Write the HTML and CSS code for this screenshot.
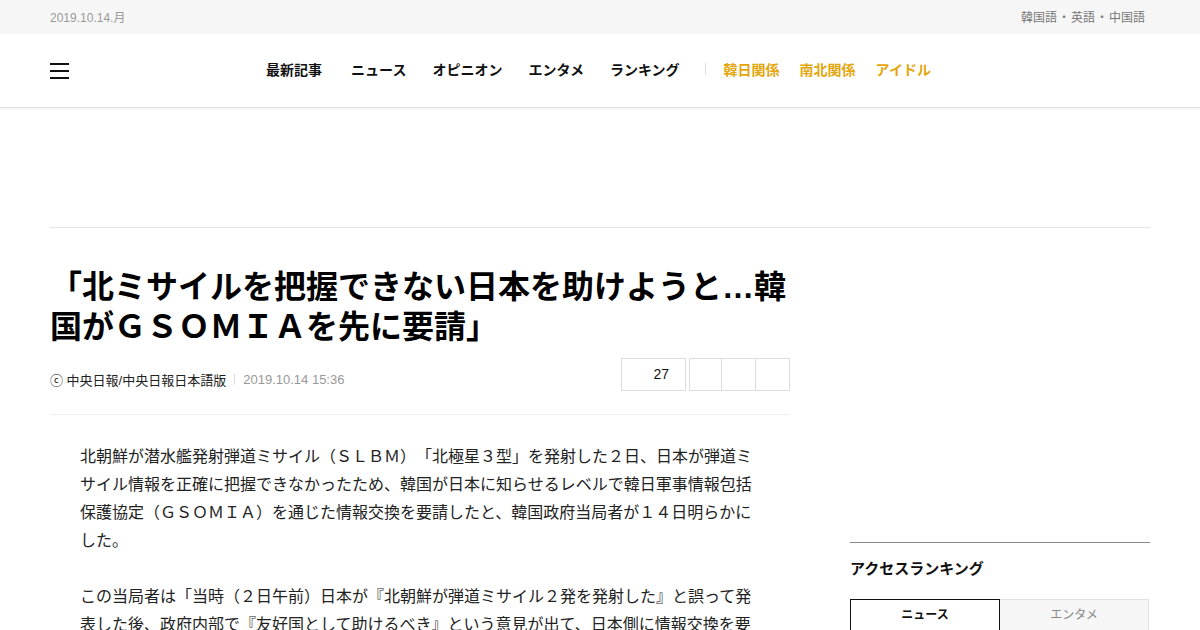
FILE: index.html
```html
<!DOCTYPE html>
<html lang="ja">
<head>
    <meta charset="UTF-8">
    <meta name="viewport" content="width=device-width, initial-scale=1.0">
    <title>「北ミサイルを把握できない日本を助けようと…韓国がＧＳＯＭＩＡを先に要請」 | 中央日報</title>
    <link rel="stylesheet" href="styles.css">
</head>
<body>
    <div class="top-bar">
        <div class="inner">
            <span class="today">2019.10.14.月</span>
            <div class="lang-links">
                <a href="#">韓国語</a><span class="dot">・</span><a href="#">英語</a><span class="dot">・</span><a href="#">中国語</a>
            </div>
        </div>
    </div>

    <div class="header">
        <div class="inner">
            <button class="menu-btn" aria-label="menu">
                <span></span><span></span><span></span>
            </button>
            <div class="gnb">
                <a href="#" class="first">最新記事</a>
                <a href="#">ニュース</a>
                <a href="#">オピニオン</a>
                <a href="#">エンタメ</a>
                <a href="#" class="last">ランキング</a>
                <span class="gnb-sep"></span>
                <a href="#" class="hot">韓日関係</a>
                <a href="#" class="hot">南北関係</a>
                <a href="#" class="hot">アイドル</a>
            </div>
        </div>
    </div>

    <div class="ad-top"></div>

    <div class="content">
        <div class="article">
            <h1 class="headline">「北ミサイルを把握できない日本を助けようと…韓国がＧＳＯＭＩＡを先に要請」</h1>
            <div class="byline">
                <div class="source">
                    <span>ⓒ 中央日報/中央日報日本語版</span>
                    <span class="bar"></span>
                    <span class="date">2019.10.14 15:36</span>
                </div>
                <div class="tools">
                    <span class="like-box">27</span>
                    <div class="share-box">
                        <span></span><span></span><span></span>
                    </div>
                </div>
            </div>
            <div class="article-body">
                北朝鮮が潜水艦発射弾道ミサイル（ＳＬＢＭ）「北極星３型」を発射した２日、日本が弾道ミサイル情報を正確に把握できなかったため、韓国が日本に知らせるレベルで韓日軍事情報包括保護協定（ＧＳＯＭＩＡ）を通じた情報交換を要請したと、韓国政府当局者が１４日明らかにした。<br><br>
                この当局者は「当時（２日午前）日本が『北朝鮮が弾道ミサイル２発を発射した』と誤って発表した後、政府内部で『友好国として助けるべき』という意見が出て、日本側に情報交換を要請した」と述べた。
            </div>
        </div>

        <div class="sidebar">
            <div class="ad-side"></div>
            <div class="ranking">
                <h3>アクセスランキング</h3>
                <div class="tabs">
                    <a href="#" class="tab on">ニュース</a>
                    <a href="#" class="tab">エンタメ</a>
                </div>
            </div>
        </div>
    </div>
</body>
</html>
```

FILE: styles.css
```css
body {
    margin: 0;
    padding: 0;
    font-family: "Liberation Sans", "Noto Sans CJK JP", sans-serif;
    color: #111;
    background-color: white;
    text-spacing-trim: space-all;
}
a {
    color: inherit;
    text-decoration: none;
}
.inner {
    width: 1100px;
    margin: 0 auto;
}

/* top bar */
.top-bar {
    background-color: #f6f6f6;
    height: 34px;
}
.top-bar .inner {
    display: flex;
    justify-content: space-between;
    align-items: center;
    height: 32px;
    font-size: 12px;
}
.today {
    color: #999;
}
.lang-links {
    color: #777;
    padding-right: 5px;
}
.lang-links .dot {
    margin: 0 1px;
}

/* header */
.header {
    height: 73px;
    border-bottom: 1px solid #e2e2e2;
    box-shadow: 0 1px 2px rgba(0,0,0,0.05);
}
.header .inner {
    position: relative;
    display: flex;
    justify-content: center;
    align-items: center;
    height: 70px;
}
.menu-btn {
    position: absolute;
    left: 0;
    top: 29px;
    width: 19px;
    height: 16px;
    padding: 0;
    border: 0;
    background: none;
    display: flex;
    flex-direction: column;
    justify-content: space-between;
    cursor: pointer;
}
.menu-btn span {
    display: block;
    height: 2px;
    background-color: #111;
}
.gnb {
    display: flex;
    align-items: center;
    font-size: 14px;
    font-weight: bold;
    margin-left: -6px;
}
.gnb a {
    margin: 0 13px;
}
.gnb a.first {
    margin-right: 16px;
}
.gnb a.last {
    margin-right: 17px;
}
.gnb .gnb-sep {
    width: 1px;
    height: 12px;
    background-color: #ddd;
    margin: 0 8px;
}
.gnb a.hot {
    color: #e3a60c;
    margin: 0 10px;
}

/* ad */
.ad-top {
    width: 1100px;
    height: 119px;
    margin: 0 auto;
    border-bottom: 1px solid #e6e6e6;
}

/* content */
.content {
    width: 1100px;
    margin: 0 auto;
    display: grid;
    grid-template-columns: 740px 300px;
    column-gap: 60px;
}
.article {
    padding-top: 39px;
}
.headline {
    margin: 0;
    font-size: 32px;
    line-height: 40px;
    font-weight: bold;
    color: #000;
    letter-spacing: 0;
}
.byline {
    display: flex;
    justify-content: space-between;
    align-items: center;
    margin-top: 11px;
    padding-bottom: 23px;
    border-bottom: 1px solid #eee;
}
.source {
    display: flex;
    align-items: center;
    font-size: 13px;
    color: #222;
    padding-top: 10px;
}
.source .bar {
    width: 1px;
    height: 11px;
    background-color: #ddd;
    margin: 0 8px;
}
.source .date {
    color: #999;
}
.tools {
    display: flex;
    gap: 3px;
}
.like-box {
    width: 65px;
    height: 33px;
    box-sizing: border-box;
    border: 1px solid #ddd;
    font-size: 14px;
    line-height: 31px;
    text-align: right;
    padding-right: 16px;
    color: #111;
}
.share-box {
    display: flex;
    border: 1px solid #ddd;
    height: 33px;
    box-sizing: border-box;
}
.share-box span {
    width: 33px;
    border-left: 1px solid #ddd;
}
.share-box span:first-child {
    width: 31px;
    border-left: 0;
}
.article-body {
    padding: 28px 30px 0;
    font-size: 16px;
    line-height: 28px;
    color: #222;
}

/* sidebar */
.sidebar {
    padding-top: 39px;
}
.ad-side {
    height: 275px;
}
.ranking {
    border-top: 1px solid #888;
}
.ranking h3 {
    margin: 0;
    padding: 16px 0 20px;
    font-size: 15px;
    line-height: 20px;
    font-weight: bold;
    color: #111;
}
.tabs {
    display: flex;
    width: 299px;
}
.tab {
    flex: 1;
    height: 32px;
    line-height: 30px;
    box-sizing: border-box;
    text-align: center;
    font-size: 12px;
    color: #888;
    background-color: #f6f6f6;
    border: 1px solid #e2e2e2;
    border-left: 0;
}
.tab.on {
    color: #111;
    font-weight: bold;
    background-color: white;
    border: 1px solid #111;
}
```
